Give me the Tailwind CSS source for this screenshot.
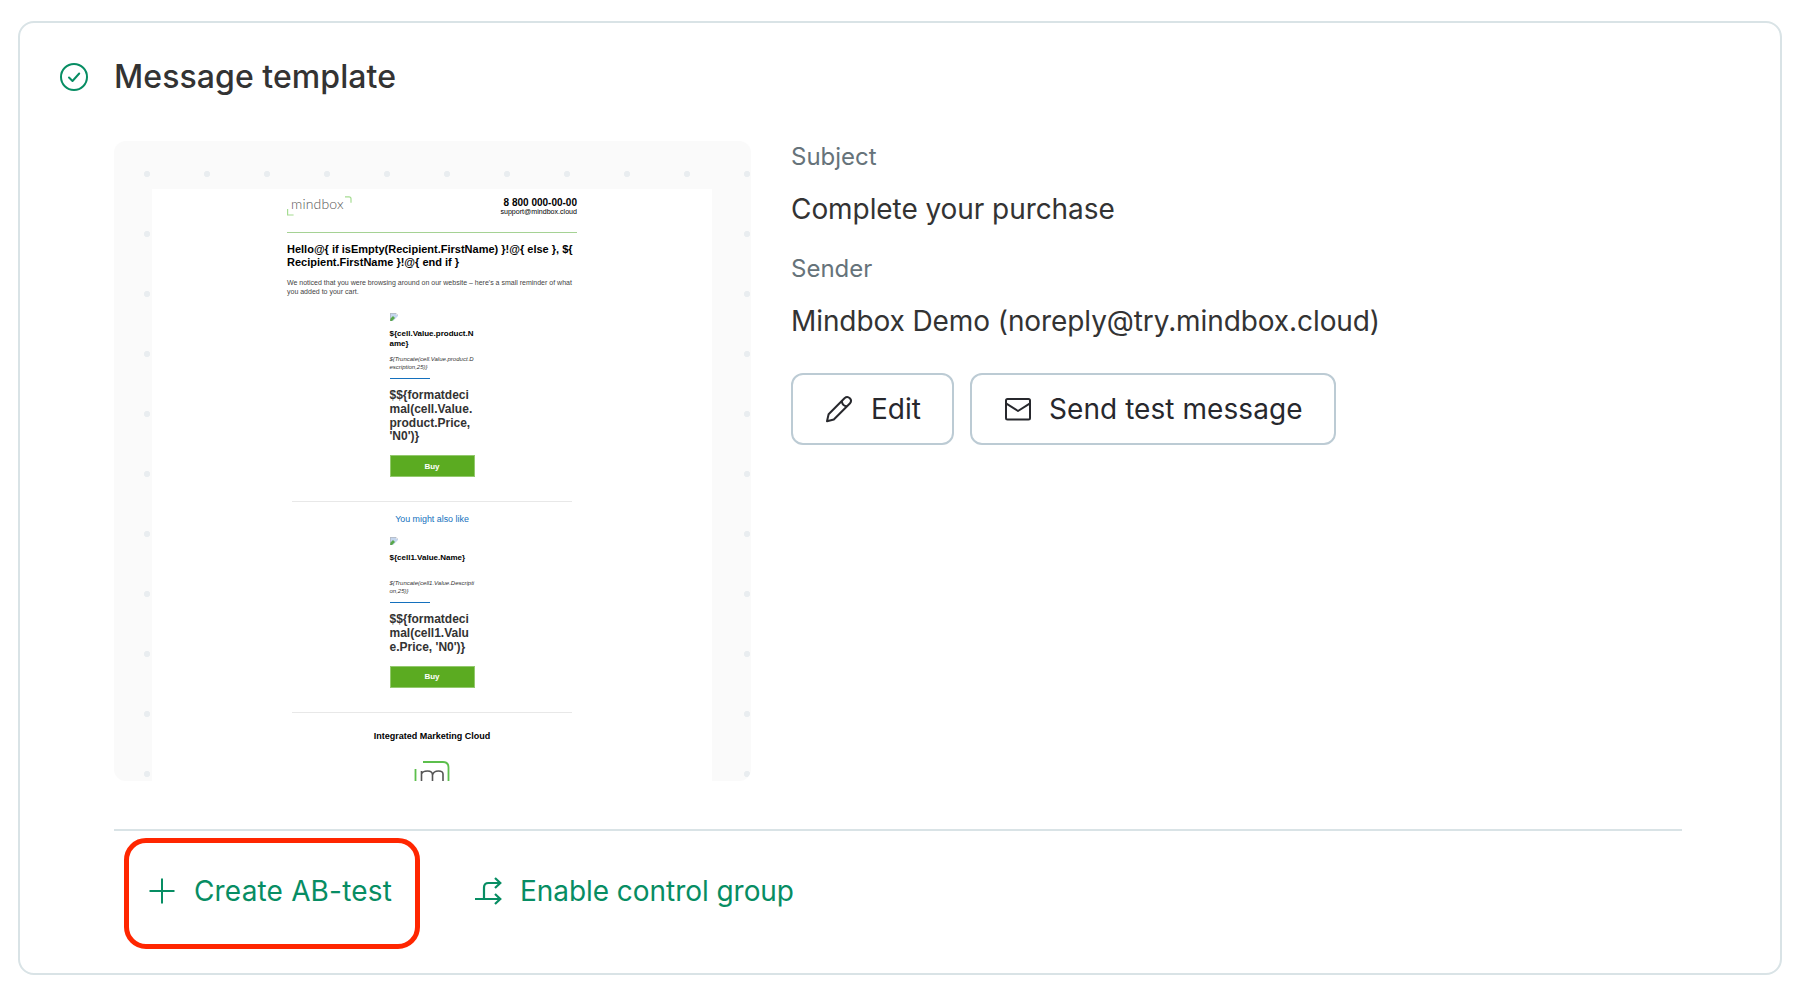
<!DOCTYPE html>
<html lang="en">
<head>
  <meta charset="UTF-8" />
  <meta name="viewport" content="width=device-width, initial-scale=1.0" />
  <title>Message template</title>
  <script src="https://cdn.jsdelivr.net/npm/@tailwindcss/browser@4"></script>
</head>
<body class="bg-white font-['Inter',sans-serif] text-[#333333] h-[990px] pt-[21px] pl-[18px] overflow-hidden">
  <div class="w-[1764px] h-[954px] border-2 border-[#d9e3e6] rounded-2xl">

    <!-- header -->
    <div class="flex items-center h-10 mt-[34px] ml-10">
      <svg class="w-7 h-7" viewBox="0 0 28 28" fill="none" stroke="#078d63" stroke-width="2" stroke-linecap="round" stroke-linejoin="round">
        <circle cx="14" cy="14" r="13" />
        <path d="M9 14.500l3.500 3.500 6.700-7.500" />
      </svg>
      <h2 class="ml-[26px] text-[32px] leading-10 font-medium tracking-[0.07px] whitespace-nowrap">Message template</h2>
    </div>

    <div class="flex mt-11 ml-[94px]">
      <!-- email preview -->
      <div class="w-[637px] h-[640px] rounded-xl overflow-hidden bg-[#fafafa] bg-[radial-gradient(circle,#e9edf0_2.8px,transparent_3.4px)] bg-[size:60px_60px] bg-[position:3px_3px] pt-12 pl-[38px]">
        <div class="w-[560px] h-[592px] bg-white pl-[135px] font-['Liberation_Sans',sans-serif] text-black whitespace-nowrap">
          <div class="flex justify-between w-[290px] h-[44px] pt-[7px] border-b border-[#a5d294]">
            <div class="relative w-[65px] h-5">
              <svg class="absolute inset-0 w-[65px] h-5" viewBox="0 0 65 20" fill="none" stroke="#a5dc92" stroke-width="1.2">
                <path d="M.6 13v6h6M58 .8h4q2 0 2 2v4" />
              </svg>
              <span class="absolute left-1 top-0 font-['Lato',sans-serif] font-light text-[14px] leading-4 tracking-[0.15px] text-[#555]">mindbox</span>
            </div>
            <div class="text-right">
              <p class="text-[10px] leading-[14px] font-bold">8 800 000-00-00</p>
              <p class="text-[7.1px] leading-[5px]">support@mindbox.cloud</p>
            </div>
          </div>
          <p class="mt-[10px] text-[11px] leading-[13px] font-bold">Hello@{ if isEmpty(Recipient.FirstName) }!@{ else }, ${<br>Recipient.FirstName }!@{ end if }</p>
          <p class="mt-[9px] text-[7px] leading-[9px] text-[#444]">We noticed that you were browsing around on our website – here's a small reminder of what<br>you added to your cart.</p>

          <div class="w-[85px] ml-[102.5px] mt-[17px]">
            <svg class="w-2 h-2" viewBox="0 0 8 8"><path d="M0 0h6l2 2v6H0z" fill="#c5d6ee" /><path d="M0 8V6l3-3 2 2-3 3z" fill="#58a84a" /><path d="M6 0v2h2M3 8l5-5v5z" fill="#fff" /><path d="M.3 7.7V.3h5.5l2 2" fill="none" stroke="#a6a6a6" stroke-width=".6" /></svg>
            <p class="mt-2 text-[8px] leading-[10px] font-bold">${cell.Value.product.N<br>ame}</p>
            <p class="mt-[6px] text-[6px] leading-2 italic text-[#333]">${Truncate(cell.Value.product.D<br>escription,25)}</p>
            <div class="mt-[7px] w-10 h-px bg-[#1470bd]"></div>
            <p class="mt-[10px] text-[12px] leading-[13.8px] font-bold text-[#333]">$${formatdeci<br>mal(cell.Value.<br>product.Price,<br>'N0')}</p>
            <div class="mt-[11px] h-[22px] bg-[#5bab21] border border-[#93c96d] text-white text-center text-[8px] leading-[21px] font-bold">Buy</div>
          </div>
          <div class="mt-[24px] ml-[5px] w-[280px] h-px bg-[#e8e8e8]"></div>
          <p class="mt-[12px] w-[290px] text-center text-[8.9px] leading-[10px] text-[#1470bd]">You might also like</p>
          <div class="w-[85px] ml-[102.5px] mt-[13px]">
            <svg class="w-2 h-2" viewBox="0 0 8 8"><path d="M0 0h6l2 2v6H0z" fill="#c5d6ee" /><path d="M0 8V6l3-3 2 2-3 3z" fill="#58a84a" /><path d="M6 0v2h2M3 8l5-5v5z" fill="#fff" /><path d="M.3 7.7V.3h5.5l2 2" fill="none" stroke="#a6a6a6" stroke-width=".6" /></svg>
            <p class="mt-2 text-[8px] leading-[10px] font-bold">${cell1.Value.Name}</p>
            <p class="mt-[16px] text-[6px] leading-2 italic text-[#333]">${Truncate(cell1.Value.Descripti<br>on,25)}</p>
            <div class="mt-[7px] w-10 h-px bg-[#1470bd]"></div>
            <p class="mt-[10px] text-[12px] leading-[13.8px] font-bold text-[#333]">$${formatdeci<br>mal(cell1.Valu<br>e.Price, 'N0')}</p>
            <div class="mt-[11px] h-[22px] bg-[#5bab21] border border-[#93c96d] text-white text-center text-[8px] leading-5 font-bold">Buy</div>
          </div>
          <div class="mt-[24px] ml-[5px] w-[280px] h-px bg-[#e8e8e8]"></div>
          <p class="mt-[18px] w-[290px] text-center text-[9px] leading-[10px] font-bold">Integrated Marketing Cloud</p>
          <svg class="mt-[20px] ml-[127px] w-9 h-5" viewBox="0 0 36 20" fill="none">
            <path d="M1.500 8v12M9 1h20q5.500 0 5.500 5.500V20" stroke="#5cbf4c" stroke-width="1.8" />
            <path d="M7.500 20V10M7.500 13q1-3 6-3 5 0 5 4v6M18.500 14q1-4 6-4 4.500 0 4.500 3v7" stroke="#555" stroke-width="1.6" />
          </svg>
        </div>
      </div>

      <!-- message details -->
      <div class="ml-10 whitespace-nowrap">
        <p class="text-2xl leading-8 text-[#66737a]">Subject</p>
        <p class="mt-4 text-[28px] leading-10 tracking-[-0.07px]">Complete your purchase</p>
        <p class="mt-6 text-2xl leading-8 text-[#66737a]">Sender</p>
        <p class="mt-4 text-[28px] leading-10 tracking-[-0.09px]">Mindbox Demo (noreply@try.mindbox.cloud)</p>
        <div class="flex gap-4 mt-8 text-[28px] text-[#27282d]">
          <button class="flex items-center w-[163px] h-[72px] pl-[30px] border-2 border-[#bccbd4] rounded-xl">
            <svg class="w-8 h-8" viewBox="0 0 32 32" fill="none" stroke="#27282d" stroke-width="2" stroke-linejoin="round"><path d="M4 28.200l1.600-7L21.500 5.200q2.800-2.400 5.300 0t0 5.300L10.800 26.500zM18.800 8q.5 5 5.200 5.200" /></svg>
            <span class="ml-4">Edit</span>
          </button>
          <button class="flex items-center w-[366px] h-[72px] pl-[30px] border-2 border-[#bccbd4] rounded-xl">
            <svg class="w-8 h-8" viewBox="0 0 32 32" fill="none" stroke="#27282d" stroke-width="2" stroke-linejoin="round"><rect x="4" y="6" width="24" height="20.500" rx="1.500" /><path d="M4 10.300l12 7.700 12-7.700" /></svg>
            <span class="ml-[15px] tracking-[0.06px]">Send test message</span>
          </button>
        </div>
      </div>
    </div>

    <!-- actions -->
    <div class="mt-12 ml-[94px] w-[1568px] border-t-2 border-[#d9e3e6] pt-[7px] flex text-[28px] text-[#078d63] whitespace-nowrap">
      <button class="ml-[10px] flex items-center w-[296px] h-[111px] pl-[17px] pb-[6px] border-5 border-[#ff2600] rounded-[22px]">
        <svg class="w-8 h-8" viewBox="0 0 32 32" fill="none" stroke="#078d63" stroke-width="2"><path d="M16 3.500v25M3.500 16h25" /></svg>
        <span class="ml-4 tracking-[0.17px]">Create AB-test</span>
      </button>
      <button class="ml-[52px] flex items-center h-[106px]">
        <svg class="w-8 h-8" viewBox="0 0 32 32" fill="none" stroke="#078d63" stroke-width="2.200"><path d="M3 24h25M12 24V12.500q0-4.500 4.500-4.500H28M23 3l5.300 5-5.300 5M23 19l5.300 5-5.300 5" /></svg>
        <span class="ml-4 tracking-[-0.05px]">Enable control group</span>
      </button>
    </div>
  </div>
</body>
</html>
